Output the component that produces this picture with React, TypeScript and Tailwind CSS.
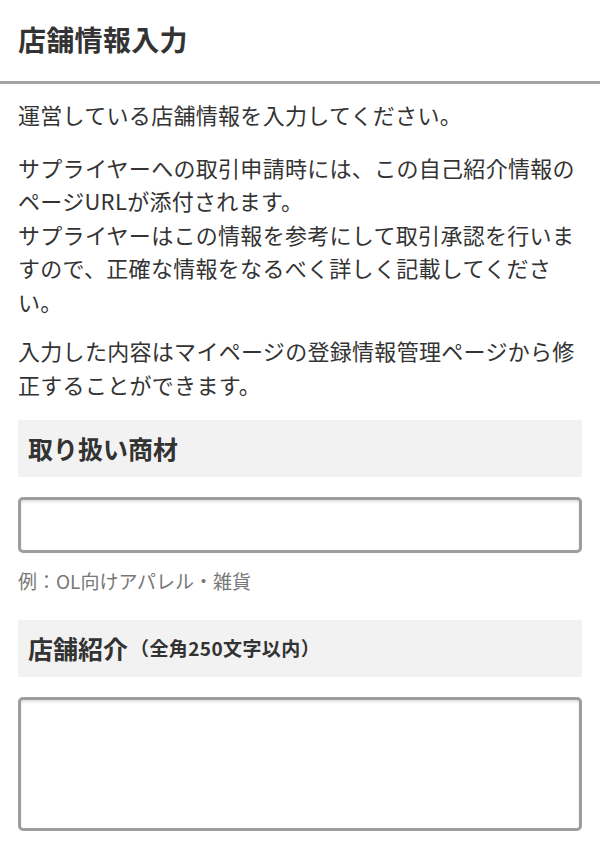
import * as React from "react";

const font = { fontFamily: '"Noto Sans CJK JP", "Noto Sans", sans-serif' };

function SectionHeading({ children }: { children: React.ReactNode }) {
  return (
    <div className="mx-[18px] flex h-[57px] items-center bg-[#f2f2f2] pl-[10px] font-bold text-[#333]">
      {children}
    </div>
  );
}

export default function App() {
  return (
    <div className="min-h-[844px] w-[600px] bg-white text-[#333]" style={font}>
      <header className="flex h-[84px] items-center border-b-[3px] border-[#a3a3a3] pb-[3px] pl-[18px]">
        <h1 className="text-[28px] font-bold leading-none tracking-[0.3px]">店舗情報入力</h1>
      </header>

      <div className="px-[18px] text-[22px] leading-[33.5px] tracking-[0.3px]">
        <p className="mt-[14px]">運営している店舗情報を入力してください。</p>
        <p className="mt-[19px]">
          サプライヤーへの取引申請時には、この自己紹介情報のページURLが添付されます。
          <br />
          サプライヤーはこの情報を参考にして取引承認を行いますので、正確な情報をなるべく詳しく記載してください。
        </p>
        <p className="mt-[16px]">
          入力した内容はマイページの登録情報管理ページから修正することができます。
        </p>
      </div>

      <div className="mt-[19px]">
        <SectionHeading>
          <span className="text-[25px]">取り扱い商材</span>
        </SectionHeading>
        <div className="mx-[18px] mt-[20px]">
          <input
            type="text"
            className="block h-[56px] w-full rounded-[5px] border-[3px] border-[#9d9d9d] bg-white shadow-[inset_0_2px_3px_rgba(0,0,0,0.12)] outline-none"
          />
          <p className="mt-[14px] text-[19px] leading-[28px] text-[#777]">例：OL向けアパレル・雑貨</p>
        </div>
      </div>

      <div className="mt-[25px]">
        <SectionHeading>
          <span className="text-[25px]">店舗紹介</span>
          <span className="ml-[2px] text-[19px] tracking-[0.4px]">（全角250文字以内）</span>
        </SectionHeading>
        <div className="mx-[18px] mt-[20px] pb-[13px]">
          <textarea className="block h-[134px] w-full resize-none rounded-[5px] border-[3px] border-[#9d9d9d] bg-white shadow-[inset_0_2px_3px_rgba(0,0,0,0.12)] outline-none" />
        </div>
      </div>
    </div>
  );
}
